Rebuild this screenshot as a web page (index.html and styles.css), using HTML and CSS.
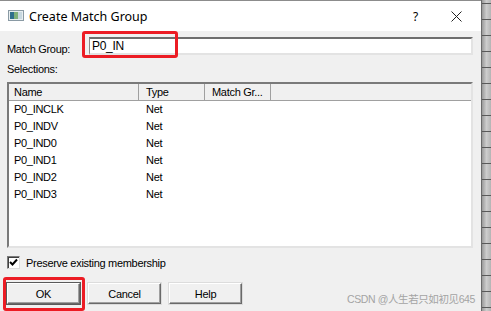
FILE: index.html
```html
<!DOCTYPE html>
<html lang="en">
<head>
    <meta charset="UTF-8">
    <title>Create Match Group</title>
    <link rel="stylesheet" href="styles.css">
</head>
<body>
    <div class="screen">
        <div class="dialog">
            <div class="titlebar">
                <svg class="app-icon" width="16" height="11" viewBox="0 0 16 11">
                    <rect x="0.5" y="0.5" width="15" height="10" fill="#e8eef0" stroke="#8a9aa4"/>
                    <rect x="2" y="2" width="4" height="7" fill="#2f6f8c"/>
                    <rect x="6" y="2" width="4" height="7" fill="#7fb07a"/>
                    <rect x="10" y="2" width="4" height="7" fill="#c8d8e0"/>
                </svg>
                <span class="title">Create Match Group</span>
                <span class="help-btn">?</span>
                <svg class="close-btn" width="11" height="11" viewBox="0 0 11 11">
                    <path d="M0.5 0.5 L10.5 10.5 M10.5 0.5 L0.5 10.5" stroke="#222" stroke-width="1"/>
                </svg>
            </div>
            <div class="content">
                <div class="field-row">
                    <label class="field-label">Match Group:</label>
                    <div class="input-wrap">
                        <div class="text-input">P0_IN</div>
                        <div class="mark mark-input"></div>
                    </div>
                </div>
                <div class="section-label">Selections:</div>
                <div class="listbox">
                    <div class="list-head">
                        <div class="col col-name">Name</div>
                        <div class="col col-type">Type</div>
                        <div class="col col-group">Match Gr...</div>
                    </div>
                    <div class="list-row"><div class="col col-name">P0_INCLK</div><div class="col col-type">Net</div></div>
                    <div class="list-row"><div class="col col-name">P0_INDV</div><div class="col col-type">Net</div></div>
                    <div class="list-row"><div class="col col-name">P0_IND0</div><div class="col col-type">Net</div></div>
                    <div class="list-row"><div class="col col-name">P0_IND1</div><div class="col col-type">Net</div></div>
                    <div class="list-row"><div class="col col-name">P0_IND2</div><div class="col col-type">Net</div></div>
                    <div class="list-row"><div class="col col-name">P0_IND3</div><div class="col col-type">Net</div></div>
                </div>
                <div class="check-row">
                    <span class="checkbox">
                        <svg width="9" height="9" viewBox="0 0 9 9">
                            <path d="M1 4 L3.5 6.5 L8 1.5" fill="none" stroke="#000" stroke-width="2"/>
                        </svg>
                    </span>
                    <span>Preserve existing membership</span>
                </div>
                <div class="button-row">
                    <div class="btn-wrap">
                        <button class="btn btn-default">OK</button>
                        <div class="mark mark-ok"></div>
                    </div>
                    <button class="btn">Cancel</button>
                    <button class="btn">Help</button>
                </div>
            </div>
            <div class="watermark">CSDN @人生若只如初见645</div>
        </div>
        <div class="edge"></div>
    </div>
</body>
</html>
```

FILE: styles.css
```css
body {
    margin: 0;
    font-family: "Liberation Sans", Arial, sans-serif;
    font-size: 11px;
    letter-spacing: -0.3px;
    color: #000;
    background-color: #f0f0f0;
}

.screen {
    display: flex;
    width: 491px;
    height: 311px;
    overflow: hidden;
}

.dialog {
    position: relative;
    width: 481px;
    background-color: #f0f0f0;
    border-top: 1px solid #8c8c8c;
}

.titlebar {
    display: flex;
    align-items: center;
    height: 30px;
    background-color: #fff;
    padding-left: 8px;
}

.app-icon {
    margin-right: 5px;
    margin-top: -1px;
}

.title {
    font-family: "Noto Sans", sans-serif;
    font-size: 12.5px;
    letter-spacing: 0;
    color: #000;
    flex: 1;
}

.help-btn {
    font-family: "Noto Sans", sans-serif;
    font-size: 12px;
    margin-right: 33px;
}

.close-btn {
    margin-right: 19px;
}

.content {
    padding: 0 8px 0 7px;
}

.field-row {
    display: flex;
    margin-top: 6px;
}

.field-label {
    width: 82px;
    padding-top: 6px;
    line-height: 13px;
}

.input-wrap {
    position: relative;
    flex: 1;
}

.text-input {
    box-sizing: border-box;
    height: 18px;
    line-height: 14px;
    padding: 0 2px;
    font-size: 12px;
    background-color: #fff;
    border-top: 2px solid #6e6e6e;
    border-left: 1px solid #8a8a8a;
    border-right: 2px solid #e3e3e3;
    border-bottom: 2px solid #e3e3e3;
}

.mark {
    position: absolute;
    border: 3px solid #ec1c24;
    border-radius: 3px;
    pointer-events: none;
}

.mark-input {
    left: -7px;
    top: -6px;
    width: 90px;
    height: 21px;
}

.section-label {
    margin-top: 7px;
    line-height: 13px;
}

.listbox {
    box-sizing: border-box;
    height: 166px;
    margin-top: 6px;
    background-color: #fff;
    border-top: 2px solid #7a7a7a;
    border-left: 2px solid #7a7a7a;
    border-right: 2px solid #e3e3e3;
    border-bottom: 2px solid #e3e3e3;
}

.list-head {
    display: flex;
    height: 16px;
    line-height: 16px;
    background-color: #f0f0f0;
    border-bottom: 1px solid #a0a0a0;
}

.list-head .col {
    border-right: 1px solid #a0a0a0;
}

.list-row {
    display: flex;
    height: 17px;
    line-height: 17px;
}

.col {
    box-sizing: border-box;
    padding-left: 5px;
    white-space: nowrap;
}

.col-name {
    width: 130px;
}

.col-type {
    width: 66px;
    padding-left: 7px;
}

.col-group {
    width: 66px;
    padding-left: 7px;
}

.check-row {
    display: flex;
    align-items: center;
    gap: 6px;
    margin-top: 8px;
    height: 13px;
}

.checkbox {
    box-sizing: border-box;
    display: flex;
    align-items: center;
    justify-content: center;
    width: 13px;
    height: 13px;
    background-color: #fff;
    border-top: 1px solid #7a7a7a;
    border-left: 1px solid #7a7a7a;
    border-right: 1px solid #dcdcdc;
    border-bottom: 1px solid #dcdcdc;
    box-shadow: inset 1px 1px 0 #404040;
}

.button-row {
    display: flex;
    gap: 8px;
    margin-top: 14px;
}

.btn-wrap {
    position: relative;
}

.btn {
    box-sizing: border-box;
    width: 73px;
    height: 21px;
    padding: 0;
    font-family: "Liberation Sans", Arial, sans-serif;
    font-size: 11px;
    letter-spacing: -0.3px;
    color: #000;
    background-color: #f0f0f0;
    border-top: 1px solid #fff;
    border-left: 1px solid #fff;
    border-right: 1px solid #696969;
    border-bottom: 1px solid #696969;
    box-shadow: inset -1px -1px 0 #a0a0a0, 0 0 0 1px #dcdcdc;
}

.btn-default {
    box-shadow: inset -1px -1px 0 #a0a0a0, 0 0 0 1px #5a5a5a;
}

.mark-ok {
    left: -4px;
    top: -6px;
    right: -5px;
    bottom: -7px;
}

.watermark {
    position: absolute;
    right: 6px;
    top: 290px;
    font-family: "Liberation Sans", "Noto Sans CJK SC", sans-serif;
    font-size: 10.5px;
    letter-spacing: -0.4px;
    color: #a4a4a4;
}

.edge {
    flex: 1;
    border-left: 1px solid #6a6a6a;
    background:
        repeating-linear-gradient(to bottom, transparent 0 3px, #5a5a5a 3px 4px, transparent 4px 16px),
        linear-gradient(to right, #9a9a9a, #cdcdcd 50%, #b4b4b4);
}
```
